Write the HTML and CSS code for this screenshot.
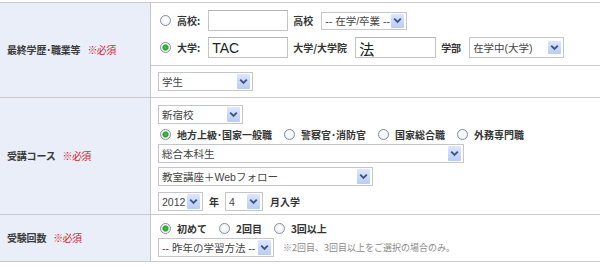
FILE: index.html
```html
<!DOCTYPE html>
<html lang="ja">
<head>
<meta charset="utf-8">
<title>フォーム</title>
<link rel="stylesheet" href="styles.css">
</head>
<body>
<div class="form">
  <div class="hd hd-edu"><span class="ht">最終学歴･職業等</span><em class="req">※必須</em></div>
  <div class="cell c-edu">
    <div class="line">
      <input type="radio" name="edu" class="rd">
      <b class="lb lb-r">高校:</b>
      <input type="text" class="tx">
      <b class="lb lb-m">高校</b>
      <label class="sel w86 h18"><select><option>-- 在学/卒業 --</option></select><span class="arr"><svg width="9" height="7" viewBox="0 0 9 7"><path d="M1.2 1.6 L4.5 4.9 L7.8 1.6" fill="none" stroke="#3f5486" stroke-width="1.9"/></svg></span></label>
    </div>
    <div class="line">
      <input type="radio" name="edu" class="rd" checked>
      <b class="lb lb-r">大学:</b>
      <input type="text" class="tx" value="TAC">
      <b class="lb lb-m">大学/大学院</b>
      <input type="text" class="tx tx2" value="法">
      <b class="lb lb-m">学部</b>
      <label class="sel w95 h21"><select><option>在学中(大学)</option></select><span class="arr"><svg width="9" height="7" viewBox="0 0 9 7"><path d="M1.2 1.6 L4.5 4.9 L7.8 1.6" fill="none" stroke="#3f5486" stroke-width="1.9"/></svg></span></label>
    </div>
  </div>
  <div class="cell c-job">
    <label class="sel w95"><select><option>学生</option></select><span class="arr"><svg width="9" height="7" viewBox="0 0 9 7"><path d="M1.2 1.6 L4.5 4.9 L7.8 1.6" fill="none" stroke="#3f5486" stroke-width="1.9"/></svg></span></label>
  </div>

  <div class="hd"><span class="ht">受講コース</span><em class="req">※必須</em></div>
  <div class="cell c-course">
    <label class="sel w85"><select><option>新宿校</option></select><span class="arr"><svg width="9" height="7" viewBox="0 0 9 7"><path d="M1.2 1.6 L4.5 4.9 L7.8 1.6" fill="none" stroke="#3f5486" stroke-width="1.9"/></svg></span></label>
    <div class="line rline">
      <input type="radio" name="type" class="rd" checked><b class="lb lb-r">地方上級･国家一般職</b>
      <input type="radio" name="type" class="rd rd-n"><b class="lb lb-r">警察官･消防官</b>
      <input type="radio" name="type" class="rd rd-n"><b class="lb lb-r">国家総合職</b>
      <input type="radio" name="type" class="rd rd-n"><b class="lb lb-r">外務専門職</b>
    </div>
    <label class="sel w306"><select><option>総合本科生</option></select><span class="arr"><svg width="9" height="7" viewBox="0 0 9 7"><path d="M1.2 1.6 L4.5 4.9 L7.8 1.6" fill="none" stroke="#3f5486" stroke-width="1.9"/></svg></span></label>
    <label class="sel w215"><select><option>教室講座＋Webフォロー</option></select><span class="arr"><svg width="9" height="7" viewBox="0 0 9 7"><path d="M1.2 1.6 L4.5 4.9 L7.8 1.6" fill="none" stroke="#3f5486" stroke-width="1.9"/></svg></span></label>
    <div class="line">
      <label class="sel w45"><select><option>2012</option></select><span class="arr"><svg width="9" height="7" viewBox="0 0 9 7"><path d="M1.2 1.6 L4.5 4.9 L7.8 1.6" fill="none" stroke="#3f5486" stroke-width="1.9"/></svg></span></label>
      <b class="lb lb-y">年</b>
      <label class="sel w38"><select><option>4</option></select><span class="arr"><svg width="9" height="7" viewBox="0 0 9 7"><path d="M1.2 1.6 L4.5 4.9 L7.8 1.6" fill="none" stroke="#3f5486" stroke-width="1.9"/></svg></span></label>
      <b class="lb lb-mo">月入学</b>
    </div>
  </div>

  <div class="hd"><span class="ht">受験回数</span><em class="req">※必須</em></div>
  <div class="cell c-times">
    <div class="line rline">
      <input type="radio" name="times" class="rd" checked><b class="lb lb-r">初めて</b>
      <input type="radio" name="times" class="rd rd-n"><b class="lb lb-r">2回目</b>
      <input type="radio" name="times" class="rd rd-n"><b class="lb lb-r">3回以上</b>
    </div>
    <div class="line">
      <label class="sel w116"><select><option>-- 昨年の学習方法 --</option></select><span class="arr"><svg width="9" height="7" viewBox="0 0 9 7"><path d="M1.2 1.6 L4.5 4.9 L7.8 1.6" fill="none" stroke="#3f5486" stroke-width="1.9"/></svg></span></label>
      <span class="note">※2回目、3回目以上をご選択の場合のみ。</span>
    </div>
  </div>
</div>
</body>
</html>
```

FILE: styles.css
```css
html, body {
  margin: 0;
  padding: 0;
  background: #fff;
}
body {
  padding-top: 2px;
  font-family: "Noto Sans CJK JP", "Liberation Sans", sans-serif;
  color: #333;
}

.form {
  display: grid;
  grid-template-columns: 151px 1fr;
  width: 600px;
  border-top: 1px solid #c9c9c9;
}

.hd {
  box-sizing: border-box;
  background: #e9eef9;
  border-right: 1px solid #c2c6cc;
  border-bottom: 1px solid #c9c9c9;
  padding-left: 7px;
  display: flex;
  align-items: center;
  font-size: 10px;
  line-height: 12px;
  white-space: pre;
}
.hd-edu {
  grid-row: span 2;
}
.ht {
  font-weight: bold;
  color: #3a3a3a;
  letter-spacing: -0.2px;
}
.req {
  font-style: normal;
  color: #d0282e;
  font-size: 10px;
  letter-spacing: -0.6px;
  margin-left: 7px;
}

.cell {
  border-bottom: 1px solid #c9c9c9;
  padding-left: 7px;
  display: flex;
  flex-direction: column;
  align-items: flex-start;
}
.c-edu {
  padding-top: 7px;
  padding-bottom: 7px;
  gap: 6px;
}
.c-job {
  padding-top: 6px;
  padding-bottom: 6px;
}
.c-course {
  padding-top: 7px;
  padding-bottom: 3px;
}
.c-course > .rline {
  margin-top: 3px;
  margin-bottom: 2px;
}
.c-course > .w215 {
  margin-top: 4px;
  margin-bottom: 6px;
}
.c-times {
  padding-top: 6px;
  padding-bottom: 4px;
  gap: 2px;
}

.line {
  display: flex;
  align-items: center;
}
.rline {
  height: 15px;
}

.lb {
  font-size: 10px;
  line-height: 12px;
  color: #333;
  white-space: nowrap;
}
.lb-r {
  margin-left: 6px;
}
.lb-r + .tx {
  margin-left: 8px;
}
.lb-m {
  margin: 0 8px 0 5px;
}
.lb-y {
  margin: 0 6px 0 6px;
}
.lb-mo {
  margin-left: 7px;
}

.rd {
  appearance: none;
  -webkit-appearance: none;
  box-sizing: border-box;
  width: 11px;
  height: 11px;
  margin: 0 0 0 2px;
  border: 1px solid #7f8ea6;
  border-radius: 50%;
  background: radial-gradient(circle at 50% 40%, #ffffff 0, #f0f1f4 70%, #dcdfe6 100%);
  flex: none;
}
.rd:checked {
  background: radial-gradient(circle at 50% 50%, #3fcf3f 0, #22a922 2.2px, #7fc87f 3px, #ffffff 3.6px, #eef0f3 100%);
}
.rd-n {
  margin-left: 12px;
}

.tx {
  box-sizing: border-box;
  width: 80px;
  height: 21px;
  margin: 0;
  padding: 1px 3px 0;
  border: 1px solid #c4c4c4;
  border-top-color: #b4b4b4;
  background: #fff;
  font-family: "Liberation Sans", "Noto Sans CJK JP", sans-serif;
  font-size: 14px;
  color: #222;
  outline: none;
}
.tx2 {
  width: 81px;
  font-size: 15px;
}

.sel {
  box-sizing: border-box;
  display: inline-flex;
  align-items: stretch;
  height: 19px;
  border: 1px solid #c4c6ca;
  background: #fff;
  flex: none;
}
.sel select {
  appearance: none;
  -webkit-appearance: none;
  flex: 1;
  min-width: 0;
  border: 0;
  margin: 0;
  padding: 0 0 0 3px;
  background: transparent;
  font-family: "Liberation Sans", "Noto Sans CJK JP", sans-serif;
  font-size: 10.5px;
  color: #444;
  outline: none;
}
.arr {
  flex: none;
  width: 13px;
  margin: 1px 2px 1px 0;
  border-radius: 1px;
  background: linear-gradient(#dde7fd, #b8ccf6);
  display: flex;
  align-items: center;
  justify-content: center;
}

.w38 { width: 38px; }
.w45 { width: 45px; }
.w85 { width: 85px; }
.w86 { width: 86px; }
.w95 { width: 95px; }
.w116 { width: 116px; }
.w215 { width: 215px; }
.w306 { width: 306px; }
.h18 { height: 18px; }
.h21 { height: 21px; }
.h21 .arr { margin-top: 3px; margin-bottom: 3px; }

.note {
  margin-left: 9px;
  font-size: 9px;
  color: #8a8a8a;
  white-space: nowrap;
}
```
